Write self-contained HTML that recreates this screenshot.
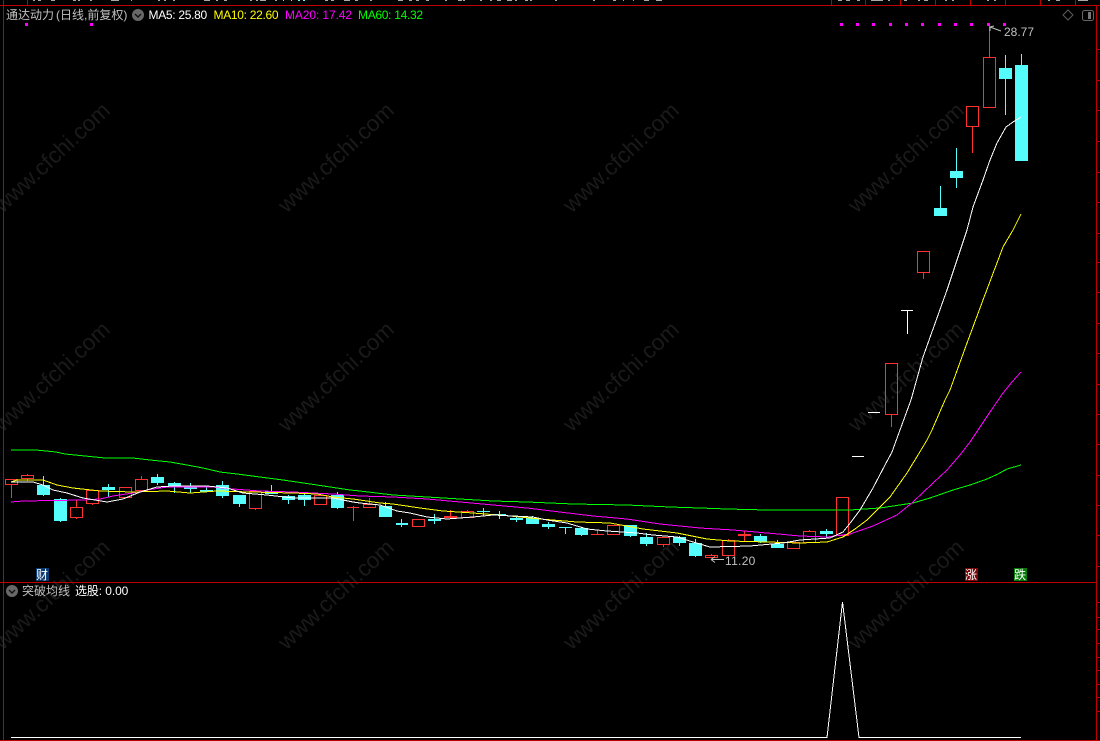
<!DOCTYPE html>
<html><head><meta charset="utf-8"><style>
html,body{margin:0;padding:0;background:#000;width:1100px;height:741px;overflow:hidden}
#c{position:absolute;left:0;top:0}
span{position:absolute;font:12px/14px "Liberation Sans","WenQuanYi Zen Hei",sans-serif;white-space:pre}
.wm text{font:22.5px "Liberation Sans",sans-serif;fill:#1a1a1a}
</style></head><body>
<svg id="c" width="1100" height="741" viewBox="0 0 1100 741">
<g class="wm">
<text transform="translate(57,163) rotate(-43)" text-anchor="middle">www.cfchi.com</text>
<text transform="translate(341,163) rotate(-43)" text-anchor="middle">www.cfchi.com</text>
<text transform="translate(626,163) rotate(-43)" text-anchor="middle">www.cfchi.com</text>
<text transform="translate(911,163) rotate(-43)" text-anchor="middle">www.cfchi.com</text>
<text transform="translate(57,382) rotate(-43)" text-anchor="middle">www.cfchi.com</text>
<text transform="translate(341,382) rotate(-43)" text-anchor="middle">www.cfchi.com</text>
<text transform="translate(626,382) rotate(-43)" text-anchor="middle">www.cfchi.com</text>
<text transform="translate(911,382) rotate(-43)" text-anchor="middle">www.cfchi.com</text>
<text transform="translate(57,600) rotate(-43)" text-anchor="middle">www.cfchi.com</text>
<text transform="translate(341,600) rotate(-43)" text-anchor="middle">www.cfchi.com</text>
<text transform="translate(626,600) rotate(-43)" text-anchor="middle">www.cfchi.com</text>
<text transform="translate(911,600) rotate(-43)" text-anchor="middle">www.cfchi.com</text>
</g>
<g shape-rendering="crispEdges">
<!-- frame -->
<path fill="none" stroke="#c00000" stroke-width="1" d="M0 5.5H1100M3.5 0V741M27.5 0V5M0 582.5H1096M0 740.5H1100M1096.5 5V741M831.5 0V5M865.5 0V5M900.5 0V5M935.5 0V5M970.5 0V5M1005.5 0V5M1040.5 0V5M1075.5 0V5
M1096 49.5h4M1096 80.5h4M1096 110.5h4M1096 141.5h4M1096 172.5h4M1096 202.5h4M1096 233.5h4M1096 262.5h4M1096 292.5h4M1096 323.5h4M1096 353.5h4M1096 384.5h4M1096 414.5h4M1096 444.5h4M1096 475.5h4M1096 505.5h4M1096 535.5h4M1096 566.5h4
M1096 602.5h4M1096 617.5h4M1096 629.5h4M1096 643.5h4M1096 657.5h4M1096 670.5h4M1096 684.5h4M1096 697.5h4M1096 711.5h4"/>
<!-- cropped text fragments on top -->
<path fill="none" stroke="#a8a8a8" d="M33 .5h2M38 .5h3M51 .5h4M73 .5h3M78 .5h2M90 .5h2M111 .5h8M131 .5h1M158 .5h2M164 .5h2M173 .5h2M204 .5h6M216 .5h2M224 .5h3M250 .5h2M256 .5h2M260 .5h6M275 .5h2M325 .5h3M331 .5h3M344 .5h6M355 .5h3M370 .5h2M398 .5h5M409 .5h3M416 .5h3M426 .5h3M445 .5h2M458 .5h4M463 .5h2M480 .5h2M490 .5h2M497 .5h4M507 .5h5M515 .5h2M525 .5h3M530 .5h2M555 .5h2M593 .5h2M613 .5h3M623 .5h1M633 .5h1M644 .5h5M656 .5h6M838 .5h4M846 .5h4M857 .5h3M871 .5h12M888 .5h2M904 .5h3M918 .5h2M924 .5h4M945 .5h2M952 .5h2M987 .5h2M994 .5h2M1048 .5h2M1056 .5h4M1078 .5h10"/>
<path fill="none" stroke="#54fcfc" d="M283 .5h1M291 .5h1M298 .5h2M303 .5h2"/>
<!-- magenta dots -->
<path fill="#ff00ff" d="M25 23h3v3h-3zM90 23h3v3h-3zM840 23h3v3h-3zM856 23h3v3h-3zM872 23h3v3h-3zM889 23h3v3h-3zM905 23h3v3h-3zM921 23h3v3h-3zM938 23h3v3h-3zM954 23h3v3h-3zM970 23h3v3h-3zM987 23h3v3h-3zM1003 23h3v3h-3z"/>
<!-- cyan wicks -->
<path fill="none" stroke="#54fcfc" d="M43.5 476V496M60.5 498V522M108.5 484V497M157.5 474V485M174.5 482V493M190.5 483V493M206.5 487V492M222.5 481V498M239.5 495V507M271.5 485V494M288.5 495V504M304.5 494V506M337.5 492V509M385.5 502V517M401.5 519V527M434.5 514V524M483.5 508V516M499.5 511V519M516.5 516V522M532.5 516V524M548.5 522V529M565.5 527V534M581.5 528V536M630.5 525V537M646.5 533V546M679.5 536V546M695.5 539V557M760.5 534V543M777.5 540V548M826.5 529V537M940.5 186V216M956.5 148V188M1005.5 55V115M1021.5 54V161"/>
<!-- cyan bodies -->
<path fill="#54fcfc" d="M37 485h13v10h-13zM54 499h13v22h-13zM102 487h13v3h-13zM151 477h13v6h-13zM168 483h13v3h-13zM184 487h13v2h-13zM200 490h13v2h-13zM216 485h13v11h-13zM233 495h13v9h-13zM265 491h13v3h-13zM282 496h13v4h-13zM298 495h13v5h-13zM331 495h13v13h-13zM379 506h13v11h-13zM396 523h12v2h-12zM428 519h13v2h-13zM477 511h13v1h-13zM493 514h13v1h-13zM510 518h13v2h-13zM526 518h13v6h-13zM542 524h13v3h-13zM559 527h13v1h-13zM575 528h13v7h-13zM624 525h13v11h-13zM640 537h13v7h-13zM673 537h13v6h-13zM689 543h13v13h-13zM754 536h13v6h-13zM771 544h13v4h-13zM820 531h13v3h-13zM934 208h13v8h-13zM950 171h13v7h-13zM999 68h13v11h-13zM1015 65h13v96h-13z"/>
<!-- red candles -->
<path fill="none" stroke="#ff3232" d="M5.5 479.5h12v5h-12zM11.5 485V498M21.5 475.5h12v3h-12zM27.5 474V475M27.5 479V481M70.5 507.5h12v10h-12zM76.5 500V507M76.5 518V519M86.5 490.5h12v13h-12zM92.5 504V505M119.5 487.5h12v10h-12zM135.5 479.5h12v11h-12zM141.5 476V479M249.5 491.5h12v17h-12zM255.5 509V510M314.5 495.5h12v9h-12zM363.5 504.5h12v3h-12zM369.5 498V504M412.5 519.5h12v7h-12zM461.5 511.5h12v6h-12zM467.5 510V511M607.5 525.5h12v9h-12zM657.5 537.5h12v7h-12zM663.5 545V547M705.5 555.5h12v2h-12zM711.5 554V555M722.5 540.5h12v15h-12zM728.5 539V540M787.5 542.5h12v6h-12zM793.5 541V542M803.5 531.5h12v11h-12zM809.5 530V531M836.5 497.5h12v38h-12zM885.5 363.5h12v51h-12zM891.5 414V427M917.5 251.5h12v21h-12zM923.5 272V279M966.5 106.5h12v20h-12zM972.5 127V153M983.5 57.5h12v50h-12zM989.5 25V57M347 507.5h12M353.5 506V521M450.5 510V516M597.5 530V534M591 534.5h13M744.5 531V542"/>
<path fill="#ff3232" d="M444 516h13v2h-13zM738 534h13v2h-13z"/>
<!-- white doji -->
<path fill="none" stroke="#fff" d="M852 456.5h12M868 412.5h12M901 310.5h12M907.5 311V334"/>
<!-- MA lines -->
<polyline fill="none" stroke="#00ff00" points="11,450 36,450 56,452 65,454 85,456 105,458 133,458 150,460 170,462 187,465 203,468 220,472 237,474 260,477 283,480 317,485 350,490 360,491 393,495 427,497 460,499 493,501 527,502 573,504 627,505 670,507 700,508 727,509 767,510 850,510 880,508 913,503 930,498 953,490 970,485 987,479 998,474 1007,469 1021,465"/>
<polyline fill="none" stroke="#ff00ff" points="11,502 23,501 83,500 100,499 113,496 133,493 147,490 167,487 213,487 233,489 260,491 293,492 333,494 360,496 393,497 427,499 460,502 493,505 527,508 560,512 593,516 627,519 660,524 700,528 733,530 767,533 800,536 827,537 850,534 873,526 897,515 913,502 933,483 947,470 960,455 970,442 978,430 990,412 1003,393 1012,382 1021,372"/>
<polyline fill="none" stroke="#ffff00" points="11,482 17,480 43,480 57,485 73,488 100,491 133,492 167,491 190,493 217,491 250,492 293,493 317,494 333,497 353,499 360,500 380,503 393,504 420,508 443,511 473,513 510,516 540,519 577,522 610,523 643,529 677,533 707,539 730,541 767,542 800,543 827,542 843,537 855,529 867,520 890,497 907,473 918,455 927,440 932,430 945,400 950,390 967,343 983,300 1003,247 1013,230 1021,214"/>
<polyline fill="none" stroke="#ffffff" points="11,482 33,482 43,485 53,490 67,493 83,498 107,502 123,499 140,492 157,487 173,486 207,486 227,488 243,493 267,495 293,498 333,498 353,502 360,503 380,505 397,511 410,513 427,517 447,519 473,517 493,515 533,517 547,520 567,523 587,529 607,531 637,533 653,535 677,537 693,542 710,547 750,546 783,543 800,540 830,538 843,532 851,522 860,510 873,488 885,465 892,452 900,430 911,400 923,357 947,290 967,230 973,207 983,180 990,160 997,143 1006,127 1013,122 1021,117"/>
<!-- indicator -->
<polyline fill="none" stroke="#ffffff" points="11,737.5 827,737.5 842.5,602 859,737.5 1021,737.5"/>
<!-- tag backgrounds -->
<path fill="#0a3a70" d="M36 568h13v13h-13z"/>
<path fill="#7a0808" d="M965 568h13v13h-13z"/>
<path fill="#087a08" d="M1014 568h13v13h-13z"/>
</g>
<!-- price arrows -->
<path fill="none" stroke="#c0c0c0" d="M711 559.5h13M711 559.5l4-3M711 559.5l4 3"/>
<path fill="none" stroke="#c0c0c0" d="M990 27l11 4M990 27l4-1M990 27l0 4"/>
<!-- icons -->
<circle cx="138" cy="15" r="6" fill="#686868"/>
<path d="M135 14l3 3 3-3" fill="none" stroke="#111" stroke-width="1.4"/>
<circle cx="12" cy="591" r="6" fill="#686868"/>
<path d="M9 590l3 3 3-3" fill="none" stroke="#111" stroke-width="1.4"/>
<path d="M1068 10l5 5-5 5-5-5z" fill="none" stroke="#5c5c5c"/>
<rect x="1082.5" y="10.5" width="11" height="10" rx="2" fill="none" stroke="#666"/>
<rect x="1088" y="12" width="3" height="7" fill="#777"/>
</svg>
<span style="left:6px;top:8px;color:#c0c0c0">通达动力</span>
<span style="left:56px;top:8px;color:#c0c0c0">(日线,前复权)</span>
<span style="left:148.5px;top:8px;color:#fff;letter-spacing:-.3px">MA5: 25.80</span>
<span style="left:213.5px;top:8px;color:#ff0;letter-spacing:-.3px">MA10: 22.60</span>
<span style="left:285px;top:8px;color:#f0f;letter-spacing:-.1px">MA20: 17.42</span>
<span style="left:358px;top:8px;color:#0f0;letter-spacing:-.3px">MA60: 14.32</span>
<span style="left:22px;top:584px;color:#c0c0c0">突破均线</span>
<span style="left:75px;top:584px;color:#fff;letter-spacing:-.1px">选股: 0.00</span>
<span style="left:36px;top:568px;color:#fff">财</span>
<span style="left:965px;top:568px;color:#fff">涨</span>
<span style="left:1014px;top:568px;color:#fff">跌</span>
<span style="left:725px;top:554px;color:#c0c0c0;letter-spacing:.3px">11.20</span>
<span style="left:1004px;top:25px;color:#c0c0c0">28.77</span>
</body></html>
